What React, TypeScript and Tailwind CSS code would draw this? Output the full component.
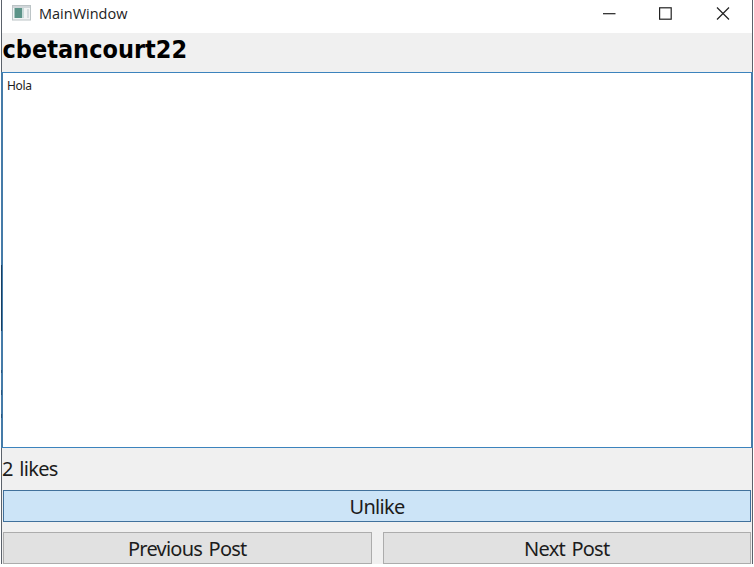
import React from "react";

function TitleBar() {
  return (
    <header className="flex h-[33px] shrink-0 items-start bg-white">
      <svg className="ml-[10px] mt-[5px] shrink-0" width="20" height="16" viewBox="0 0 20 16">
        <rect x="0.5" y="0.5" width="18" height="14.5" fill="#f2f4f4" stroke="#bcc4c6" />
        <rect x="1" y="1" width="17" height="2" fill="#d0d6d9" />
        <rect x="2.5" y="3" width="7.5" height="10" fill="#5c9488" />
        <rect x="10" y="3" width="2" height="10" fill="#c9dcda" />
        <path d="M16 4v9" stroke="#cbd4d7" strokeWidth="1.5" />
      </svg>
      <span className="ml-[7px] mt-[4px] font-['Open_Sans','Noto_Sans',sans-serif] text-[14.5px] leading-[20px] text-[#222]">
        MainWindow
      </span>
      <svg className="ml-auto mr-[22px] mt-[6px] shrink-0" width="127" height="15" viewBox="0 0 127 15" fill="none" stroke="#222" strokeWidth="1.2">
        <path d="M0 7.7h12.5" />
        <rect x="56.6" y="1.8" width="11.6" height="11.4" />
        <path d="M114 1.5l12 12M126 1.5l-12 12" />
      </svg>
    </header>
  );
}

function PushButton({ children }: { children: React.ReactNode }) {
  return (
    <button className="h-[32px] min-w-0 flex-1 border border-[#acacac] bg-[#e1e1e1] pt-px text-[20px] leading-[30px] tracking-[-0.75px] [word-spacing:2px]">
      {children}
    </button>
  );
}

export default function App() {
  return (
    <div className="h-[567px] w-[754px] overflow-hidden bg-white px-px font-['Noto_Sans',sans-serif] text-[#1c1c1c]">
      <main className="flex h-[564px] flex-col border-x border-[#5b626b] bg-[#f0f0f0]">
        <TitleBar />
        <h1 className="h-[39px] shrink-0 whitespace-nowrap pl-[0.5px] font-['DejaVu_Sans_Condensed','DejaVu_Sans',sans-serif] text-[25px] font-bold leading-[33px] text-black">
          cbetancourt22
        </h1>
        <section className="relative -mx-px h-[376px] shrink-0 border-x-2 border-y border-x-[#457ba8] border-y-[#3c83bd] bg-white pl-[4px] pt-[4px] text-[12px] leading-[18px] tracking-[-0.3px]">
          Hola
          <span className="absolute -left-[2px] top-[192px] h-[66px] w-px bg-[#173f63]" />
          <span className="absolute -left-[2px] top-[297px] h-[3px] w-px bg-[#24557f]" />
          <span className="absolute -left-[2px] top-[317px] h-[5px] w-px bg-[#24557f]" />
          <span className="absolute -left-[2px] top-[341px] h-[4px] w-px bg-[#24557f]" />
        </section>
        <p className="h-[42px] shrink-0 text-[20px] leading-[42px] tracking-[-0.7px] [word-spacing:2px]">2 likes</p>
        <button className="mx-px h-[32px] shrink-0 border border-[#41719c] bg-[#cce4f7] pt-px text-[20px] leading-[30px] tracking-[-0.7px]">
          Unlike
        </button>
        <div className="mx-px mt-[10px] flex gap-[11px]">
          <PushButton>Previous Post</PushButton>
          <PushButton>Next Post</PushButton>
        </div>
      </main>
    </div>
  );
}
